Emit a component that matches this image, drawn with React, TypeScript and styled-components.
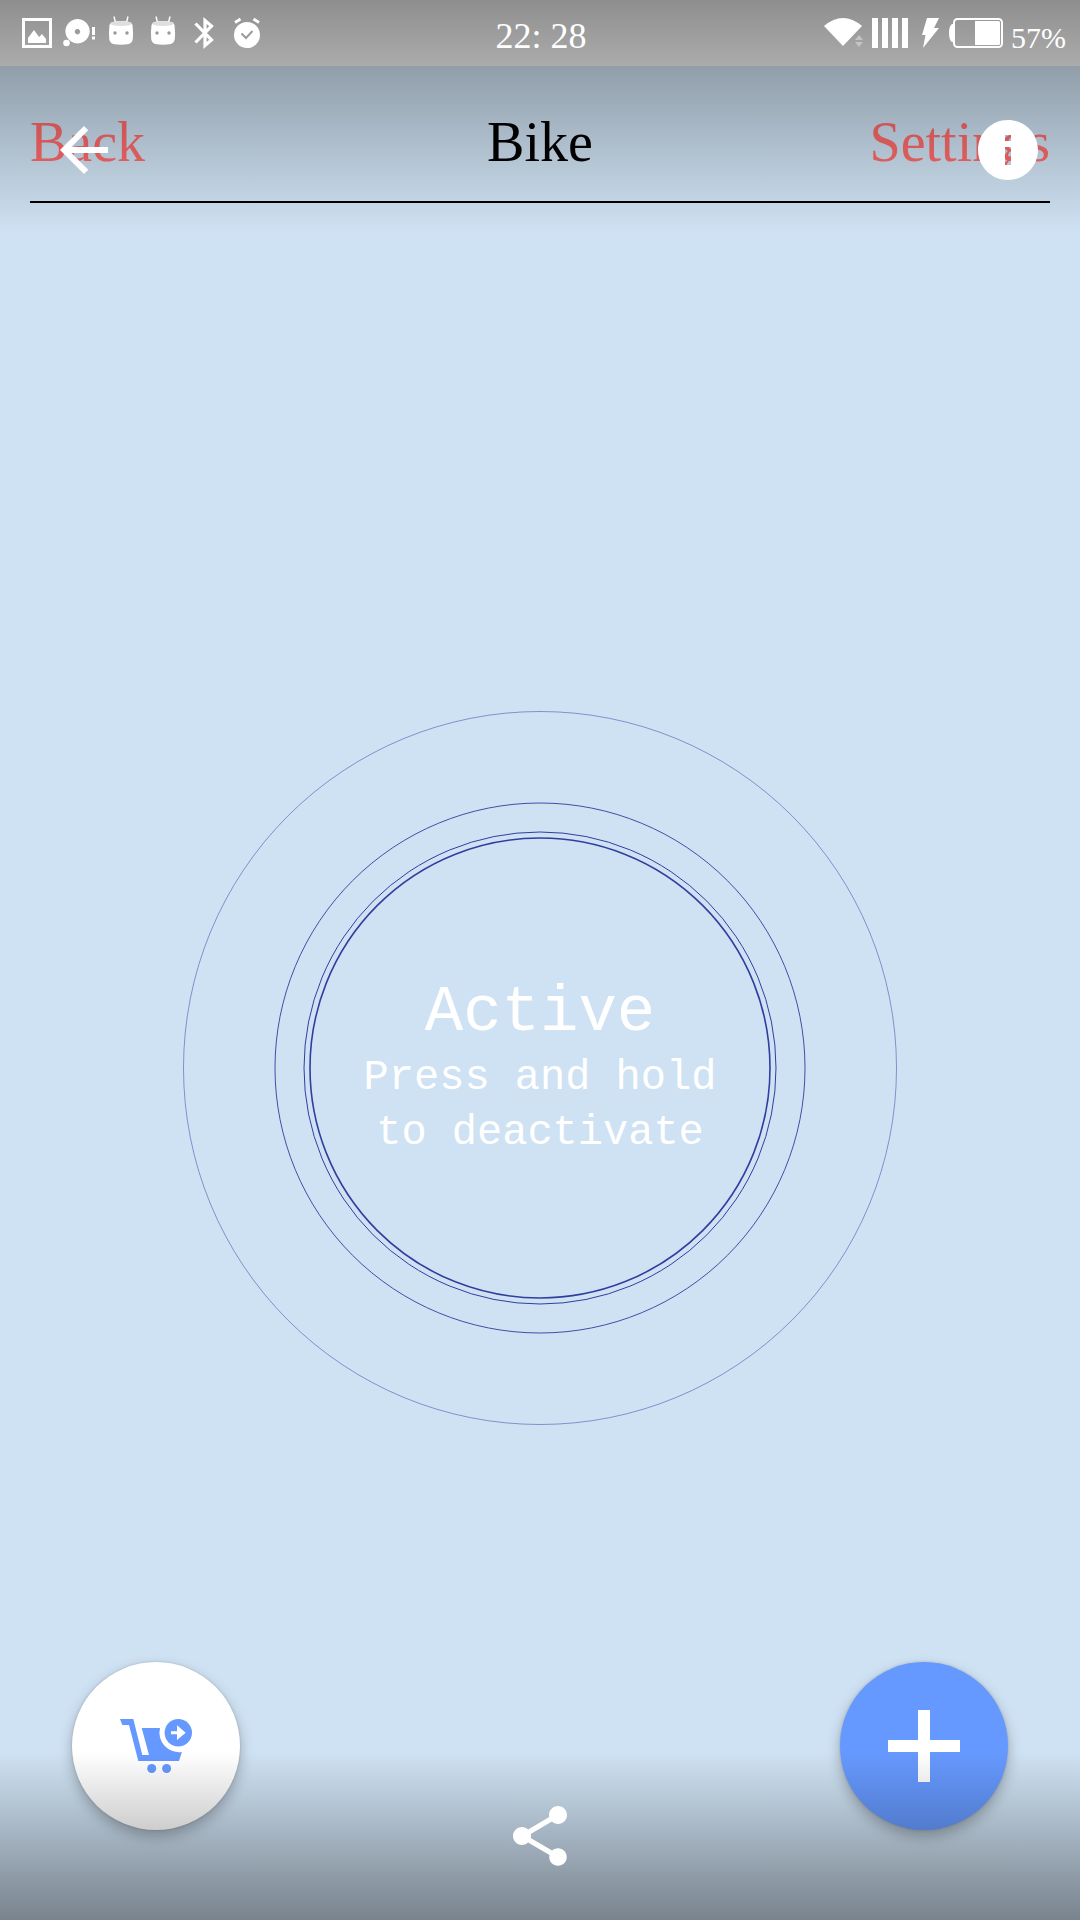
import React from "react";
import styled, { createGlobalStyle } from "styled-components";

const GlobalStyle = createGlobalStyle`
  *, *::before, *::after { box-sizing: border-box; }
  body { margin: 0; background: #cfe2f3; }
  button { appearance: none; border: 0; padding: 0; background: none; color: inherit; cursor: pointer; }
  svg { display: block; flex: none; }
`;

const serif = `"Liberation Serif", "Times New Roman", serif`;
const mono = `"Liberation Mono", "Courier New", monospace`;

/* The app, the scrims and the viewer controls are stacked in one grid cell. */
const Screen = styled.div`
  display: grid;
  min-height: 100vh;
  font-family: ${serif};

  > * {
    grid-area: 1 / 1;
    min-width: 0;
  }
`;

const AppLayer = styled.div`
  display: flex;
  flex-direction: column;
  background: #cfe2f3;
`;

const StatusBackdrop = styled.div`
  height: 66px;
  background: #f5f5f5;
`;

const Header = styled.header`
  display: grid;
  grid-template-columns: 1fr auto 1fr;
  margin: 0 30px 13px;
  padding: 44px 0 27px;
  border-bottom: 2px solid #000;
`;

const Title = styled.h1`
  margin: 0;
  font-size: 56px;
  line-height: 64px;
  font-weight: 400;
  color: #000;
`;

const HeaderLink = styled.a<{ $end?: boolean }>`
  justify-self: ${(p) => (p.$end ? "end" : "start")};
  font-size: 56px;
  line-height: 64px;
  color: #ff6a6a;
  text-decoration: none;
`;

const Body = styled.main`
  flex: 1;
  display: grid;

  > * {
    grid-area: 1 / 1;
  }
`;

const Radar = styled.div`
  place-self: center;
  display: grid;
  place-items: center;

  > * {
    grid-area: 1 / 1;
  }
`;

const HoldButton = styled.button`
  display: flex;
  flex-direction: column;
  align-items: center;
  justify-content: center;
  width: 460px;
  height: 460px;
  border-radius: 50%;
  font-family: ${mono};
  color: #fff;
`;

const HoldState = styled.span`
  font-size: 64px;
  line-height: 76px;
`;

const HoldHint = styled.span`
  font-size: 42px;
  line-height: 55px;
`;

const Actions = styled.div`
  align-self: end;
  display: flex;
  justify-content: space-between;
  padding: 0 72px 90px;
`;

const Fab = styled.button<{ $tone: string }>`
  display: grid;
  place-items: center;
  width: 168px;
  height: 168px;
  border-radius: 50%;
  background: ${(p) => p.$tone};
  box-shadow: 0 6px 14px rgba(0, 0, 0, 0.26), 0 0 3px rgba(0, 0, 0, 0.16);
`;

const ScrimLayer = styled.div`
  z-index: 1;
  display: flex;
  flex-direction: column;
  justify-content: space-between;
  pointer-events: none;
`;

const Scrim = styled.div<{ $to: string; $height: number }>`
  height: ${(p) => p.$height}px;
  background: linear-gradient(to ${(p) => p.$to}, rgba(0, 0, 0, 0.42), rgba(0, 0, 0, 0));
`;

const ControlLayer = styled.div`
  z-index: 2;
  display: flex;
  flex-direction: column;
  color: #fff;
  pointer-events: none;

  button {
    pointer-events: auto;
  }
`;

const StatusBar = styled.div`
  display: grid;
  grid-template-columns: 1fr auto 1fr;
  align-items: start;
  height: 66px;
  padding: 16px 14px 0 16px;
`;

const StatusGroup = styled.div<{ $end?: boolean }>`
  display: flex;
  gap: ${(p) => (p.$end ? 8 : 0)}px;
  justify-content: ${(p) => (p.$end ? "flex-end" : "flex-start")};
`;

const Clock = styled.time`
  font-size: 36px;
  line-height: 40px;
`;

const BatteryLevel = styled.span`
  font-size: 30px;
  line-height: 44px;
`;

const Toolbar = styled.div`
  display: flex;
  justify-content: space-between;
  padding: 48px 36px 0 48px;
`;

const ShareBar = styled.div`
  display: flex;
  justify-content: center;
  margin-top: auto;
  padding-bottom: 48px;
`;

const MaterialIcon = ({ d }: { d: string }) => (
  <svg width="72" height="72" viewBox="0 0 24 24" fill="currentColor" aria-hidden="true">
    <path d={d} />
  </svg>
);

const StatusIcon = ({ width = 42, children }: { width?: number; children: React.ReactNode }) => (
  <svg width={width} height="34" viewBox={`0 0 ${width} 34`} fill="#fff" aria-hidden="true">
    {children}
  </svg>
);

const PictureIcon = () => (
  <StatusIcon>
    <rect x="7.5" y="3.5" width="27" height="27" fill="none" stroke="#fff" strokeWidth="3" />
    <path d="M12 27v-5l6-8 5 7 3-3 4 5v4z" />
  </StatusIcon>
);

const DiscIcon = () => (
  <StatusIcon>
    <path fillRule="evenodd" d="M19.5 3a12.2 12.2 0 1 0 .1 0zM19.5 13a2.7 2.7 0 1 1-.1 0z" />
    <circle cx="8.5" cy="27" r="3.3" />
    <path d="M34 11h3v8h-3zM34 20.500h3v3h-3z" />
  </StatusIcon>
);

const AndroidIcon = () => (
  <StatusIcon>
    <path d="M14 .5l1.500 6M28 .5l-1.500 6" stroke="#fff" strokeWidth="1.400" />
    <path d="M9.500 9q1-4 11.500-4t11.500 4q1 8 .3 14-.6 4-4 5-7.800 1.500-15.600 0-3.400-1-4-5-.6-7 .3-14z" />
    <path d="M10.500 6.500q10.500-3 21 0l-1 2.500q-9.500 2-19 0z" fill="#dedede" />
    <circle cx="15" cy="17" r="1.700" fill="#999" />
    <circle cx="27" cy="17" r="1.700" fill="#999" />
  </StatusIcon>
);

const BluetoothIcon = () => (
  <StatusIcon>
    <path
      d="M11.500 7.500L27.500 24l-6.500 5.500v-25L27.500 10 11.500 26.500"
      fill="none"
      stroke="#fff"
      strokeWidth="3.200"
    />
  </StatusIcon>
);

const AlarmIcon = () => (
  <StatusIcon>
    <circle cx="21" cy="19" r="13" />
    <path d="M9 6.500l5.500-3.500M33 6.500L27.500 3" stroke="#fff" strokeWidth="2.800" />
    <path d="M15.500 17.500l4.500 4.500 6.500-7" fill="none" stroke="#9b9b9b" strokeWidth="2" />
  </StatusIcon>
);

const WifiIcon = () => (
  <StatusIcon width={40}>
    <path d="M0 10q19-16 38 0L19 30z" />
    <path d="M31 24l4-5 4 5zM31 26h8l-4 5z" fill="#c4c4c4" />
  </StatusIcon>
);

const SignalIcon = () => (
  <StatusIcon width={36}>
    <path d="M0 2h6v30H0zM10 2h6v30h-6zM20 2h6v30h-6zM30 2h6v30h-6z" />
  </StatusIcon>
);

const ChargingIcon = () => (
  <StatusIcon width={25}>
    <path d="M11 2h12l-5 10h5L7 32l2.500-13H6z" />
  </StatusIcon>
);

const BatteryIcon = () => (
  <StatusIcon width={54}>
    <rect x="5" y="3" width="48" height="28" rx="3.500" fill="none" stroke="#fff" strokeWidth="2" />
    <path d="M5 8H3q-3 2-3 9t3 9h2zM26 5h23.500q1.500 0 1.500 1.500v21q0 1.500-1.500 1.500H26z" />
  </StatusIcon>
);

const CartIcon = () => (
  <svg width="72" height="54" viewBox="0 0 72 54" fill="#6699ff" aria-hidden="true">
    <path d="M0 0h13.300l9 36H29L21.700 9H40a19.500 19.500 0 0 0 21.900 24L59 42H18.300L9 6H2.300z" />
    <circle cx="58.300" cy="13.700" r="13.700" />
    <circle cx="31.700" cy="49.500" r="4.500" />
    <circle cx="46.600" cy="49.500" r="4.500" />
    <path d="M51 12.300h6v-6l8.700 7.400L57 21v-5.700h-6z" fill="#fff" />
  </svg>
);

const PlusIcon = () => (
  <svg width="72" height="72" viewBox="0 0 72 72" fill="#fff" aria-hidden="true">
    <path d="M30 0h12v30h30v12H42v30H30V42H0V30h30z" />
  </svg>
);

const Rings = () => (
  <svg width="716" height="716" viewBox="0 0 716 716" fill="none" stroke="#303f9f" aria-hidden="true">
    <circle cx="358" cy="358" r="356.500" strokeOpacity="0.500" />
    <circle cx="358" cy="358" r="265" strokeOpacity="0.900" />
    <circle cx="358" cy="358" r="236" />
    <circle cx="358" cy="358" r="230" strokeWidth="1.600" />
  </svg>
);

const ARROW_BACK = "M20 11H7.830l5.590-5.590L12 4l-8 8 8 8 1.410-1.410L7.830 13H20v-2z";
const INFO =
  "M12 2C6.480 2 2 6.480 2 12s4.480 10 10 10 10-4.480 10-10S17.520 2 12 2zm1 15h-2v-6h2v6zm0-8h-2V7h2v2z";
const SHARE =
  "M18 16.080c-.76 0-1.440.3-1.960.77L8.910 12.700c.05-.23.09-.46.09-.7s-.04-.47-.09-.7l7.050-4.110c.54.5 1.250.81 2.040.81 1.660 0 3-1.340 3-3s-1.340-3-3-3-3 1.340-3 3c0 .24.04.47.09.7L8.040 9.810C7.500 9.310 6.790 9 6 9c-1.660 0-3 1.340-3 3s1.340 3 3 3c.79 0 1.500-.31 2.040-.81l7.120 4.160c-.05.21-.08.43-.08.65 0 1.610 1.310 2.920 2.920 2.920s2.920-1.310 2.920-2.920-1.310-2.920-2.920-2.920z";

export default function App() {
  return (
    <>
      <GlobalStyle />
      <Screen>
        <AppLayer>
          <StatusBackdrop />
          <Header>
            <HeaderLink href="#back">Back</HeaderLink>
            <Title>Bike</Title>
            <HeaderLink href="#settings" $end>
              Settings
            </HeaderLink>
          </Header>
          <Body>
            <Radar>
              <Rings />
              <HoldButton type="button">
                <HoldState>Active</HoldState>
                <HoldHint>Press and hold</HoldHint>
                <HoldHint>to deactivate</HoldHint>
              </HoldButton>
            </Radar>
            <Actions>
              <Fab type="button" $tone="#ffffff" aria-label="Go to cart">
                <CartIcon />
              </Fab>
              <Fab type="button" $tone="#6699ff" aria-label="Add">
                <PlusIcon />
              </Fab>
            </Actions>
          </Body>
        </AppLayer>

        <ScrimLayer>
          <Scrim $to="bottom" $height={234} />
          <Scrim $to="top" $height={168} />
        </ScrimLayer>

        <ControlLayer>
          <StatusBar>
            <StatusGroup>
              <PictureIcon />
              <DiscIcon />
              <AndroidIcon />
              <AndroidIcon />
              <BluetoothIcon />
              <AlarmIcon />
            </StatusGroup>
            <Clock>22: 28</Clock>
            <StatusGroup $end>
              <WifiIcon />
              <SignalIcon />
              <ChargingIcon />
              <BatteryIcon />
              <BatteryLevel>57%</BatteryLevel>
            </StatusGroup>
          </StatusBar>
          <Toolbar>
            <button type="button" aria-label="Navigate up">
              <MaterialIcon d={ARROW_BACK} />
            </button>
            <button type="button" aria-label="Details">
              <MaterialIcon d={INFO} />
            </button>
          </Toolbar>
          <ShareBar>
            <button type="button" aria-label="Share">
              <MaterialIcon d={SHARE} />
            </button>
          </ShareBar>
        </ControlLayer>
      </Screen>
    </>
  );
}
